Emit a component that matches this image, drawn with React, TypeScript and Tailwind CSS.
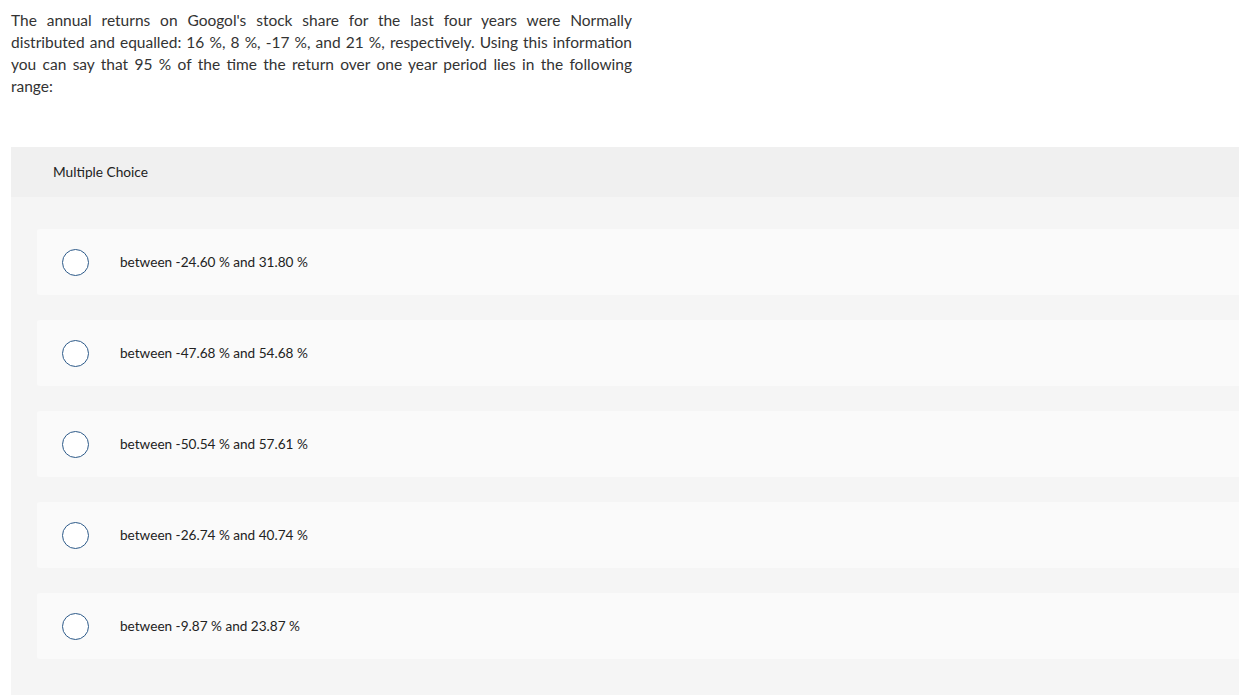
const options = [
  'between -24.60 % and 31.80 %',
  'between -47.68 % and 54.68 %',
  'between -50.54 % and 57.61 %',
  'between -26.74 % and 40.74 %',
  'between -9.87 % and 23.87 %',
];

const questionLines = [
  "The annual returns on Googol's stock share for the last four years were Normally",
  'distributed and equalled: 16 %, 8 %, -17 %, and 21 %, respectively. Using this information',
  'you can say that 95 % of the time the return over one year period lies in the following',
];

export default function App() {
  return (
    <div className="min-h-[695px] bg-white font-['Lato','Liberation_Sans',sans-serif] text-[#333]">
      <div className="pt-[9px] pl-[11px]">
        <div className="w-[621px] text-[15.5px] leading-[22px] text-[#333]">
          {questionLines.map((line) => (
            <p key={line} className="text-justify [text-align-last:justify]">
              {line}
            </p>
          ))}
          <p>range:</p>
        </div>
      </div>

      <div className="mt-[50px] ml-[11px] bg-[#f5f5f5] pb-[36px]">
        <div className="flex h-[50px] items-center bg-[#f0f0f0] pl-[42px] text-[13.7px] text-[#222]">
          Multiple Choice
        </div>
        <div className="flex flex-col gap-[25px] pt-[32px] pl-[26px]">
          {options.map((opt) => (
            <div
              key={opt}
              className="flex h-[66px] items-center rounded-l-[3px] bg-[#fafafa] pl-[25px]"
            >
              <span className="h-[27px] w-[27px] shrink-0 rounded-full border-[1.5px] border-[#2d5a89] bg-white" />
              <span className="ml-[31px] text-[13.6px] text-[#222]">{opt}</span>
            </div>
          ))}
        </div>
      </div>
    </div>
  );
}
